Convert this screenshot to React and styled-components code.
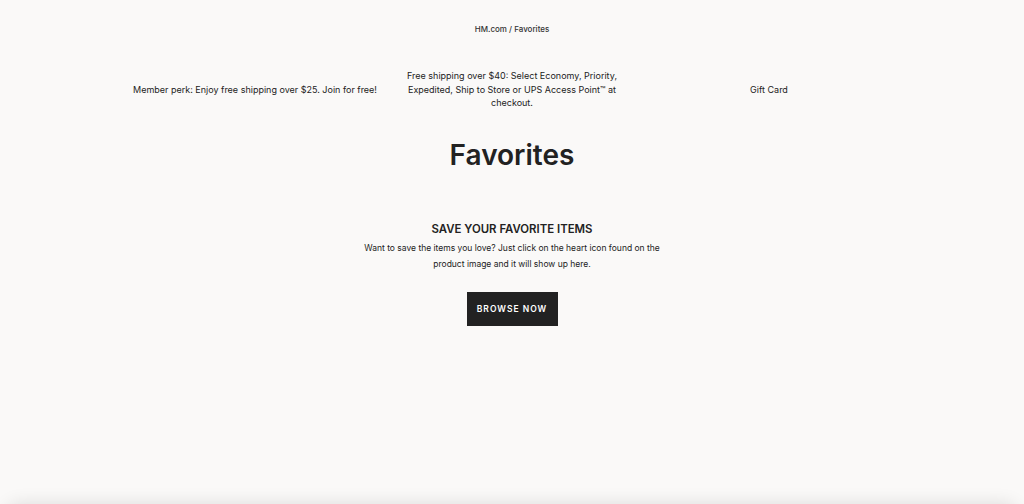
import React from "react";
import styled, { createGlobalStyle } from "styled-components";

const GlobalStyle = createGlobalStyle`
  html, body {
    margin: 0;
    padding: 0;
    background: #faf9f8;
    font-family: "Inter", "Liberation Sans", sans-serif;
    color: #222;
    overflow: hidden;
  }
`;

const Page = styled.div`
  min-height: 504px;
  display: flex;
  flex-direction: column;
  align-items: center;
`;

const Breadcrumb = styled.nav`
  margin-top: 23px;
  font-size: 8px;
  font-weight: 500;
  color: #333;
  line-height: 12px;
`;

const PromoRow = styled.div`
  margin-top: 34px;
  width: 771px;
  display: grid;
  grid-template-columns: repeat(3, 1fr);
  align-items: center;
`;

const Promo = styled.p`
  margin: 0;
  padding: ${(p) => (p.$wrap ? "0 14px" : "0 3px")};
  text-align: center;
  font-size: 9px;
  line-height: 13.5px;
  color: #222;
`;

const Title = styled.h1`
  margin: 29px 0 0;
  font-size: 28px;
  font-weight: 600;
  line-height: 32px;
  color: #222;
`;

const Empty = styled.section`
  margin-top: 51px;
  display: flex;
  flex-direction: column;
  align-items: center;
  width: 300px;
  text-align: center;
`;

const EmptyHeading = styled.h2`
  margin: 0;
  font-size: 11.4px;
  font-weight: 600;
  line-height: 14px;
  color: #222;
`;

const EmptyText = styled.p`
  margin: 4px 0 0;
  font-size: 8.5px;
  line-height: 16px;
  color: #222;
`;

const Button = styled.button`
  margin-top: 20px;
  width: 91px;
  height: 34px;
  border: none;
  background: #222;
  color: #fff;
  font-family: inherit;
  font-size: 8.5px;
  font-weight: 600;
  letter-spacing: 1px;
  cursor: pointer;
`;

const BottomSheet = styled.div`
  position: fixed;
  left: 6px;
  right: 6px;
  bottom: -40px;
  height: 40px;
  border-radius: 14px;
  background: #faf9f8;
  box-shadow: 0 0 18px rgba(0, 0, 0, 0.12);
`;

export default function App() {
  return (
    <>
      <GlobalStyle />
      <Page>
        <Breadcrumb>HM.com / Favorites</Breadcrumb>
        <PromoRow>
          <Promo>Member perk: Enjoy free shipping over $25. Join for free!</Promo>
          <Promo $wrap>
            Free shipping over $40: Select Economy, Priority, Expedited, Ship to
            Store or UPS Access Point™ at checkout.
          </Promo>
          <Promo>Gift Card</Promo>
        </PromoRow>
        <Title>Favorites</Title>
        <Empty>
          <EmptyHeading>SAVE YOUR FAVORITE ITEMS</EmptyHeading>
          <EmptyText>
            Want to save the items you love? Just click on the heart icon found
            on the product image and it will show up here.
          </EmptyText>
          <Button>BROWSE NOW</Button>
        </Empty>
      </Page>
      <BottomSheet />
    </>
  );
}
